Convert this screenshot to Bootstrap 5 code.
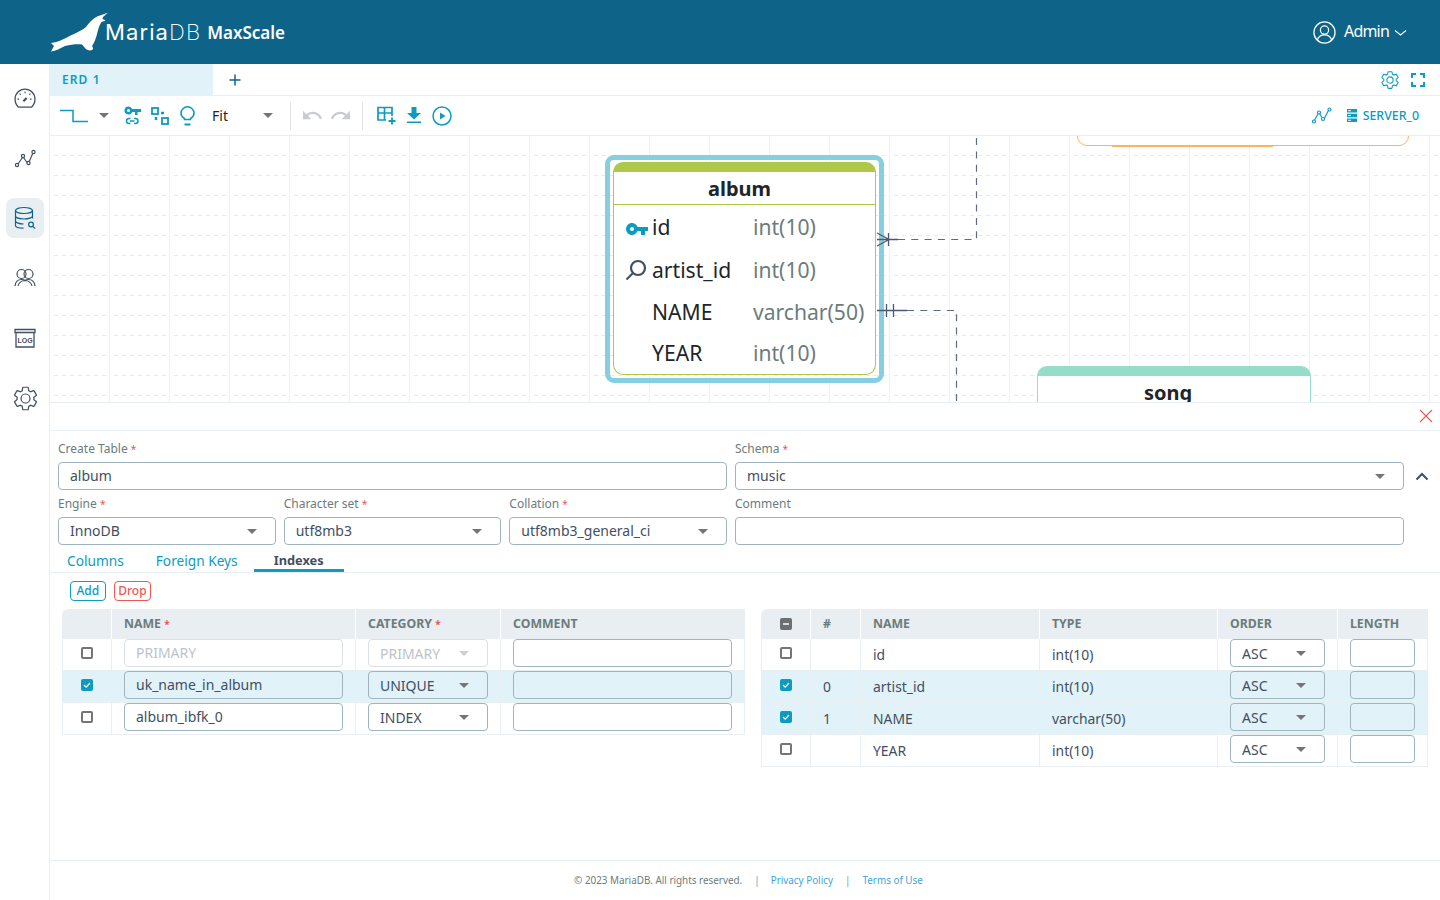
<!DOCTYPE html>
<html lang="en"><head><meta charset="utf-8"><title>MaxScale ERD</title>
<link href="https://cdn.jsdelivr.net/npm/bootstrap@5.3.0/dist/css/bootstrap.min.css" rel="stylesheet">
<style>
html,body{height:900px;overflow:hidden}
body{font-family:"Noto Sans","Liberation Sans",sans-serif;color:#424f62;font-size:14px;background:#fff}
.app-head{height:64px;background:#0e6488;color:#fff}
.logo-seal{margin-left:51px;margin-top:1px}
.logo-m{font-family:Inter,sans-serif;font-size:22px;margin-left:-3px;letter-spacing:1.1px;font-weight:400}
.logo-db{font-weight:200}
.logo-x{font-size:17px;font-weight:600;margin-left:6px;margin-top:2px}
.admin{font-size:16px;margin-right:33px;letter-spacing:-.8px}
.adm-tx{margin-bottom:2px}
.adm-chev{margin-left:5px;margin-top:2px}
.adm-ico{margin-right:8px}
.sidebar{width:50px;border-right:1px solid #e8eef1;padding-top:14px}
.side-btn{width:38px;height:40px;margin:0 0 20px 6px;border-radius:8px}
.side-btn.on{background:#e8eef1}
.main-col{min-width:0}
.tabbar{height:32px;border-bottom:1px solid #e8eef1}
.erd-tab{width:163px;height:31px;background:#e1f3f9;color:#0e9bc0;font-size:12px;font-weight:600;letter-spacing:1.1px;padding-left:12px}
.tb-plus{margin-left:15px;margin-top:9px}
.tb-gear{margin-right:11px}
.tb-full{margin-right:15px}
.toolbar{height:40px;border-bottom:1px solid #e8eef1;padding-left:10px;color:#0e9bc0}
.car{display:inline-block;width:0;height:0;border-left:5px solid transparent;border-right:5px solid transparent;border-top:5px solid #757575;flex:none}
.ml-a{margin-left:11px}.ml-b{margin-left:15px}.ml-c{margin-left:10px}.ml-d{margin-left:11px}
.fit-box{margin-left:17px;width:51px;font-size:14px;color:#212529}
.vdiv{width:1px;height:28px;background:#e0e4e6}
.ml-e{margin-left:17px}.ml-f{margin-left:12px}.ml-g{margin-left:9px}.ml-h{margin-left:12px}.ml-i{margin-left:13px}.ml-j{margin-left:11px}
.srv{font-size:12.4px;font-weight:500;margin:2px 21px 0 6px;color:#0e9bc0}
.ml-l{margin-left:15px}
.canvas{height:267px;border-bottom:1px solid #e8eef1;position:relative;overflow:hidden}
.cv-svg{position:absolute;left:0;top:0}
.node{position:absolute;background:#fff;border-style:solid;border-width:10px 1px 1px;border-radius:10px}
.node-head{font-weight:700;text-align:center;color:#212529}
.hl{position:absolute;left:555px;top:19px;width:279px;height:228px;border:5px solid #87cfe0;border-radius:9px}
.n-album{left:563px;top:26px;width:263px;height:213px;border-color:#aec84a}
.n-album .node-head{font-size:20px;height:33px;line-height:34px;border-bottom:1px solid #aec84a;padding-right:10px}
.n-song{left:987px;top:230px;width:274px;height:80px;border-color:#95dccb}
.n-song .node-head{font-size:20px;line-height:34px;padding-right:12px}
.n-orange{left:1027px;top:-61px;width:332px;height:71px;border:1.5px solid #fdb45e;border-radius:10px}
.n-orange::after{content:"";position:absolute;left:34px;bottom:-1.5px;width:161px;height:2px;background:#fdb45e}
.n-row{height:41.5px;font-size:21.100px;color:#212529}
.n-row.r-a{padding-top:2.5px}
.n-row.r-b{height:44.5px;padding-top:3px}
.n-row.r-c{padding-top:1px}
.n-ico{width:38px;flex:none;padding-left:11px}
.n-ico.i-up{margin-bottom:5px}
.n-ico.i-key{margin-top:-1px}
.n-name{width:101px;flex:none}
.n-type{color:#6c7c7c}
.x-bar{height:28px;border-bottom:1px solid #e8eef1;padding:0 7px 1px 0}
.form-pad{padding:0 0 0 8px}
.f-lab{font-size:12px;line-height:16px;color:#6c7c7c;height:16px;margin-bottom:5px}
.req{color:#eb5757;font-size:10px}
.lab-1{margin-top:10px}
.f-ctl{height:28px;border:1px solid #9fb4bd;border-radius:4px;padding:0 11px;font-size:14px;line-height:26px;color:#424f62;display:flex;align-items:center;justify-content:space-between;background:transparent}
.f-ctl .car{margin-right:7px}
.f-grow{flex:1 1 0;min-width:0}
.form-row{gap:8px;width:1346px}
.chev{width:36px}
.cv-up{margin-top:41px}
.r2{margin-top:6px}
.tabs{height:26px;border-bottom:1px solid #e8eef1;margin-top:2px}
.t-link{font-size:13.7px;color:#0e9bc0;height:25px;line-height:27px}
.t-1{margin-left:17px}.t-2{margin-left:32px}
.t-3{margin-left:16px;width:90px;text-align:center;font-weight:700;color:#424f62;font-size:12.8px;border-bottom:3px solid #0e9bc0;height:25px;line-height:27px}
.btns{padding:8px 0 8px 20px;gap:8px}
.mini{height:20px;border:1px solid #0e9bc0;border-radius:4px;color:#0e9bc0;font-size:12px;line-height:18px;padding:0 5.5px;font-weight:500}
.mini.dr{border-color:#eb5757;color:#eb5757;padding:0 3.5px}
.tbl-wrap{padding-left:12px;gap:16px;align-items:flex-start}
.gt{table-layout:fixed;border-collapse:separate;border-spacing:0;font-size:13.9px;color:#424f62}
.gt th{height:30px;background:#e8eef1;color:#6c7c7c;font-size:12.3px;font-weight:700;padding:0 12px;border-right:1px solid #fff;vertical-align:middle}
.gt th:first-child{border-top-left-radius:6px}
.gt th:last-child{border-right:0}
.gt td{height:32px;padding:0 12px 3px;border-right:1px solid #e8eef1;border-bottom:1px solid #e8eef1;vertical-align:middle}
.gt td.tx{padding:2px 12px 0}
.gt td:first-child{border-left:1px solid #e8eef1;text-align:center;padding:0}
.gt tr.sel td{background:#e1f3f9}
.tl{width:683px}.tr{width:667px}
.gt .f-ctl{height:28px}
.gt .f-ctl.slc{padding-top:1px}
.dis{color:#bcc4c8;border-color:#dbe1e4}
.dis .car{border-top-color:#c9cfd2}
.cb{display:inline-block;width:12px;height:12px;border:2px solid #757575;border-radius:2px;vertical-align:middle;position:relative;top:-2px}
.cb.on{background:#0e9bc0;border-color:#0e9bc0}
.cb.mid{background:#6b6f72;border-color:#6b6f72;top:0}
.cb svg{display:block;margin:-2px}
.app-foot{height:40px;border-top:1px solid #e8eef1;font-size:9.9px;color:#6c7c7c;margin-top:auto;padding-left:7px}
.app-foot a{color:#3f9fe0;text-decoration:none}
.fsep{margin:0 12px;color:#6c9cb8}
.fsep.f-a{margin:0 11px 0 12px}
.ar{padding:0!important;text-align:center}
</style></head>
<body class="d-flex flex-column">
<header class="app-head d-flex align-items-center justify-content-between flex-shrink-0">
 <div class="d-flex align-items-center">
  <svg class="logo-seal" width="57" height="39" viewBox="0 0 57 39"><path fill="#fff" d="M57 0C54 .6 50 2 46 3.500 41 6 38 10 35 14 29 19 22 21 16 24.500 11 27 6 29.500 0 30l3 3-3 5.500C5 38 9 35.500 14 33c6-1.500 12-2 17-1.500 2 2 4 6 8 6 3-.5 4-1.500 2-4.500 1.500-2 3-5.500 4.500-10 1.500-6 2.500-10.500 5-14 .6-.5 2-.7 3.500-1 .5-.5 0-1.200-1.500-1.500-1-.2-1.300-1-.5-2.500C53.500 2.500 55.500 1 57 0z"/></svg>
  <span class="logo-m">Maria<span class="logo-db">DB</span></span><span class="logo-x">MaxScale</span>
 </div>
 <div class="admin d-flex align-items-center">
  <svg class="adm-ico" width="23" height="23" viewBox="0 0 24 24" fill="none" stroke="#fff" stroke-width="1.300"><circle cx="12" cy="12" r="11"/><circle cx="12" cy="9.500" r="4.300"/><path d="M4.500 20c1-3.500 4-5.500 7.500-5.500s6.500 2 7.500 5.500"/></svg>
  <span class="adm-tx">Admin</span>
  <svg class="adm-chev" width="13" height="8" viewBox="0 0 13 8" fill="none" stroke="#fff" stroke-width="1.100"><path d="M1 1.500l5.500 4.500 5.500-4.500"/></svg>
 </div>
</header>
<div class="d-flex flex-grow-1 overflow-hidden">
 <nav class="sidebar flex-shrink-0">
  <div class="side-btn d-flex align-items-center justify-content-center"><svg width="26" height="26" viewBox="0 0 24 24" fill="none" stroke="#424f62" stroke-width="1.200"><path d="M6 20.500h12c2-1.800 3.200-4.400 3.200-7.500A9.200 9.200 0 0 0 2.800 13c0 3.100 1.200 5.700 3.200 7.500z"/><path d="M12 6v1.500M5 13h1.500M18 13h-1.500M7 8l1 1M17 8l-1 1" stroke-width="1"/><path d="M10.500 15l3-3" stroke-width="2"/></svg></div>
  <div class="side-btn d-flex align-items-center justify-content-center"><svg width="24" height="24" viewBox="0 0 24 24" fill="none" stroke="#424f62" stroke-width="1.200"><path d="M5 18l4.500-6.500M10.500 11.500l3.500 5M16 16l3.500-8"/><circle cx="4" cy="19" r="1.600"/><circle cx="10" cy="10" r="1.600"/><circle cx="15.500" cy="17" r="1.600"/><circle cx="20.500" cy="6" r="1.600"/></svg></div>
  <div class="side-btn on d-flex align-items-center justify-content-center"><svg width="24" height="24" viewBox="0 0 24 24" fill="none" stroke="#0e6488" stroke-width="1.200"><ellipse cx="11" cy="4.500" rx="8.500" ry="3"/><path d="M2.500 4.500v15c0 1.700 3.500 2.700 8 2.700M19.500 4.500v8M2.500 10c0 1.700 3.800 3 8.500 3s8.500-1.300 8.500-3M2.500 15c0 1.700 3.800 3 8 3"/><circle cx="18" cy="18.500" r="2.400"/><path d="M19.800 20.300l2.200 2.200"/></svg></div>
  <div class="side-btn d-flex align-items-center justify-content-center"><svg width="24" height="24" viewBox="0 0 24 24" fill="none" stroke="#424f62" stroke-width="1.200"><circle cx="8.500" cy="8" r="4.500"/><circle cx="15.500" cy="8" r="4.500"/><path d="M2 20c.5-4 3-6.500 6.500-6.500 2 0 3 .5 3.500 1 .5-.5 1.500-1 3.500-1 3.500 0 6 2.500 6.500 6.500M5 20c.5-3 3.500-5.500 7-5.500S18.500 17 19 20"/></svg></div>
  <div class="side-btn d-flex align-items-center justify-content-center"><svg width="24" height="24" viewBox="0 0 24 24" fill="none" stroke="#424f62" stroke-width="1.300"><path d="M2 3.500h20v3H2zM3 6.500V21h18V6.500" /><text x="12" y="16.500" text-anchor="middle" font-family="Liberation Sans,sans-serif" font-size="7" font-weight="700" fill="#424f62" stroke="none">LOG</text></svg></div>
  <div class="side-btn d-flex align-items-center justify-content-center"><svg width="27" height="27" viewBox="0 0 24 24" fill="none" stroke="#424f62" stroke-width="1.100"><circle cx="12" cy="12" r="4"/><path d="M10,22C9.75,22 9.54,21.82 9.5,21.58L9.13,18.93C8.5,18.68 7.96,18.34 7.44,17.94L4.95,18.95C4.73,19.03 4.46,18.95 4.34,18.73L2.34,15.27C2.21,15.05 2.27,14.78 2.46,14.63L4.57,12.97L4.5,12L4.57,11L2.46,9.37C2.27,9.22 2.21,8.95 2.34,8.73L4.34,5.27C4.46,5.05 4.73,4.96 4.95,5.05L7.44,6.05C7.96,5.66 8.5,5.32 9.13,5.07L9.5,2.42C9.54,2.18 9.75,2 10,2H14C14.25,2 14.46,2.18 14.5,2.42L14.87,5.07C15.5,5.32 16.04,5.66 16.56,6.05L19.05,5.05C19.27,4.96 19.54,5.05 19.66,5.27L21.66,8.73C21.79,8.95 21.73,9.22 21.54,9.37L19.43,11L19.5,12L19.43,13L21.54,14.63C21.73,14.78 21.79,15.05 21.66,15.27L19.66,18.73C19.54,18.95 19.27,19.04 19.05,18.95L16.56,17.95C16.04,18.34 15.5,18.68 14.87,18.93L14.5,21.58C14.46,21.82 14.25,22 14,22H10Z"/></svg></div>
 </nav>
 <main class="main-col flex-grow-1 d-flex flex-column">
  <div class="tabbar d-flex align-items-start flex-shrink-0">
   <div class="erd-tab d-flex align-items-center">ERD 1</div>
   <svg class="tb-plus" width="14" height="14" viewBox="0 0 14 14" stroke="#0e6488" stroke-width="1.500"><path d="M7 1.500v11M1.500 7h11"/></svg>
   <div class="ms-auto d-flex align-items-center h-100">
    <svg class="tb-gear" width="20" height="20" viewBox="0 0 24 24" fill="none" stroke="#0e9bc0" stroke-width="1.300"><circle cx="12" cy="12" r="3.800"/><path d="M10,22C9.75,22 9.54,21.82 9.5,21.58L9.13,18.93C8.5,18.68 7.96,18.34 7.44,17.94L4.95,18.95C4.73,19.03 4.46,18.95 4.34,18.73L2.34,15.27C2.21,15.05 2.27,14.78 2.46,14.63L4.57,12.97L4.5,12L4.57,11L2.46,9.37C2.27,9.22 2.21,8.95 2.34,8.73L4.34,5.27C4.46,5.05 4.73,4.96 4.95,5.05L7.44,6.05C7.96,5.66 8.5,5.32 9.13,5.07L9.5,2.42C9.54,2.18 9.75,2 10,2H14C14.25,2 14.46,2.18 14.5,2.42L14.87,5.07C15.5,5.32 16.04,5.66 16.56,6.05L19.05,5.05C19.27,4.96 19.54,5.05 19.66,5.27L21.66,8.73C21.79,8.95 21.73,9.22 21.54,9.37L19.43,11L19.5,12L19.43,13L21.54,14.63C21.73,14.78 21.79,15.05 21.66,15.27L19.66,18.73C19.54,18.95 19.27,19.04 19.05,18.95L16.56,17.95C16.04,18.34 15.5,18.68 14.87,18.93L14.5,21.58C14.46,21.82 14.25,22 14,22H10Z"/></svg>
    <svg class="tb-full" width="14" height="14" viewBox="0 0 14 14" fill="none" stroke="#0e9bc0" stroke-width="2"><path d="M1 5V1h4M9 1h4v4M13 9v4H9M5 13H1V9"/></svg>
   </div>
  </div>
  <div class="toolbar d-flex align-items-center flex-shrink-0">
   <svg width="28" height="14" viewBox="0 0 28 14" fill="none" stroke="#0e9bc0" stroke-width="1.500"><path d="M0 1.500h13v11h15"/></svg>
   <span class="car ml-a"></span>
   <svg class="ml-b" width="17" height="19" viewBox="0 0 17 19" fill="none" stroke="#0e9bc0"><path fill="#0e9bc0" stroke="none" d="M4.500 0.500a4 4 0 1 0 3.700 5.500H11v3h2.500V6H17V3H8.200A4 4 0 0 0 4.500.5zm0 2.500a1.500 1.500 0 1 1 0 3 1.500 1.500 0 0 1 0-3z"/><path stroke-width="1.500" d="M6.500 12.500H5a2.500 2.500 0 0 0 0 5h1.500M10 12.500h1.500a2.500 2.500 0 0 1 0 5H10M6 15h4.500"/></svg>
   <svg class="ml-c" width="18" height="18" viewBox="0 0 18 18" fill="none" stroke="#0e9bc0" stroke-width="1.800"><rect x="1" y="1" width="6" height="6"/><rect x="11" y="11" width="6" height="6"/><path d="M10 6h3M5 10v3" stroke-width="2.500"/></svg>
   <svg class="ml-d" width="15" height="20" viewBox="0 0 15 20" fill="none" stroke="#0e9bc0" stroke-width="1.600"><path d="M4.500 13.500v-1C2.300 11.300 1 9.500 1 7.300a6.500 6.500 0 0 1 13 0c0 2.200-1.300 4-3.500 5.200v1z"/><path d="M4.500 18.500h6" stroke-width="2"/></svg>
   <div class="fit-box">Fit</div><span class="car"></span>
   <span class="vdiv ml-e"></span>
   <svg class="ml-f" width="19" height="11" viewBox="2 7 20.500 10" fill="#c9ccce"><path d="M12.500,8C9.85,8 7.45,9 5.6,10.6L2,7V16H11L7.38,12.38C8.77,11.22 10.54,10.5 12.500,10.500C16.040,10.500 19.050,12.810 20.100,16L22.470,15.220C21.080,11.030 17.150,8 12.500,8Z"/></svg>
   <svg class="ml-g" width="19" height="11" viewBox="1.500 7 20.500 10" fill="#c9ccce"><path d="M18.400,10.600C16.550,9 14.150,8 11.500,8C6.850,8 2.920,11.030 1.530,15.220L3.900,16C4.950,12.810 7.960,10.500 11.500,10.500C13.450,10.500 15.230,11.220 16.620,12.380L13,16H22V7L18.400,10.600Z"/></svg>
   <span class="vdiv ml-h"></span>
   <svg class="ml-i" width="20" height="19" viewBox="0 0 20 19" fill="none" stroke="#0e9bc0" stroke-width="1.700"><path d="M10 14H2V1.500h14V10M1.500 7H16M8.500 2v12"/><path d="M16 11.500v7M12.500 15h7" stroke-width="1.800"/></svg>
   <svg class="ml-j" width="14" height="17" viewBox="0 0 14 17" fill="#0e9bc0"><path d="M4.500 0h5v6H14l-7 6.500L0 6h4.500zM0 14.500h14V16H0z"/></svg>
   <svg class="ml-j" width="20" height="20" viewBox="0 0 20 20" fill="none" stroke="#0e9bc0" stroke-width="1.500"><circle cx="10" cy="10" r="9"/><path fill="#0e9bc0" stroke="none" d="M8 6.500v7l5.500-3.500z"/></svg>
   <svg class="ms-auto" width="20" height="17" viewBox="0 0 20 17" fill="none" stroke="#0e9bc0" stroke-width="1.200"><path d="M2.500 13l3.500-6M7.500 6.500l2.500 4M12.500 11l4-7.500"/><circle cx="2" cy="14.500" r="1.500"/><circle cx="7" cy="5.500" r="1.500"/><circle cx="11" cy="12" r="1.500"/><circle cx="17.500" cy="2.500" r="1.500"/></svg>
   <svg class="ml-l" width="10" height="13" viewBox="0 0 10 13" fill="#0e9bc0"><path d="M0 0h10v3.500H0zM0 4.700h10v3.600H0zM0 9.500h10V13H0z"/><path fill="#fff" d="M1 1.200h3v1H1zM1 6h3v1H1zM1 10.800h3v1H1z"/></svg>
   <span class="srv">SERVER_0</span>
  </div>
  <section class="canvas flex-shrink-0">
   <svg class="cv-svg" width="1390" height="267" viewBox="0 0 1390 267">
    <defs><pattern id="gp" width="60" height="20" patternUnits="userSpaceOnUse" x="0" y="0">
     <path d="M4 19.500h4M12 19.500h4M20 19.500h4M28 19.500h4M36 19.500h4M44 19.500h4M52 19.500h4" stroke="#e6eaed" stroke-width="1" fill="none"/>
     <path d="M59.500 0v20" stroke="#eff1f3" stroke-width="1" fill="none"/></pattern></defs>
    <rect width="1390" height="267" fill="url(#gp)"/>
    <g fill="none" stroke="#5c6b80" stroke-width="1.200" stroke-dasharray="7 6.300">
     <path d="M848 103.500h78.500V0"/><path d="M857 174.500h49.500V267"/>
    </g>
    <circle cx="1312" cy="1" r="1" fill="#5c6b80"/><circle cx="1341" cy="1" r="1" fill="#5c6b80"/>
   </svg>
   <div class="n-orange node"></div>
   <div class="hl"></div>
   <div class="node n-album">
    <div class="node-head">album</div>
    <div class="n-row r-a d-flex align-items-center"><span class="n-ico i-key"><svg width="24" height="24" viewBox="0 0 24 24" fill="#0e9bc0"><path d="M7 14C5.900 14 5 13.100 5 12S5.900 10 7 10 9 10.900 9 12 8.100 14 7 14M12.600 10C11.800 7.700 9.600 6 7 6C3.700 6 1 8.700 1 12S3.700 18 7 18C9.600 18 11.800 16.300 12.600 14H16V18H20V14H23V10H12.600Z"/></svg></span><span class="n-name">id</span><span class="n-type">int(10)</span></div>
    <div class="n-row r-b d-flex align-items-center"><span class="n-ico i-up"><svg width="22" height="22" viewBox="0 0 22 22" fill="none" stroke="#424f62" stroke-width="2.200"><circle cx="13" cy="9" r="7"/><path d="M8 14l-6.500 6.500"/></svg></span><span class="n-name">artist_id</span><span class="n-type">int(10)</span></div>
    <div class="n-row r-c d-flex align-items-center"><span class="n-ico"></span><span class="n-name">NAME</span><span class="n-type">varchar(50)</span></div>
    <div class="n-row d-flex align-items-center"><span class="n-ico"></span><span class="n-name">YEAR</span><span class="n-type">int(10)</span></div>
   </div>
   <div class="node n-song"><div class="node-head">song</div></div>
   <svg class="cv-svg" width="1390" height="267" viewBox="0 0 1390 267">
    <g fill="none" stroke="#4a5a72" stroke-width="1.300">
     <path d="M827 97l12 6.500-12 6.500M827 103.500h21M838.500 97v13"/>
     <path d="M827 174.500h30M836.500 168v13M843.500 168v13"/>
    </g>
   </svg>
  </section>
  <div class="x-bar d-flex align-items-center justify-content-end flex-shrink-0"><svg width="14" height="14" viewBox="0 0 14 14" stroke="#eb5757" stroke-width="1.100"><path d="M1 1l12 12M13 1L1 13"/></svg></div>
  <div class="form-pad">
   <div class="d-flex align-items-start">
    <div class="form-row">
     <div class="d-flex form-row">
      <div class="f-grow"><div class="f-lab lab-1">Create Table <span class="req">*</span></div><div class="f-ctl">album</div></div>
      <div class="f-grow"><div class="f-lab lab-1">Schema <span class="req">*</span></div><div class="f-ctl">music<span class="car"></span></div></div>
     </div>
     <div class="d-flex form-row r2">
      <div class="f-grow d-flex gap-2">
       <div class="f-grow"><div class="f-lab">Engine <span class="req">*</span></div><div class="f-ctl">InnoDB<span class="car"></span></div></div>
       <div class="f-grow"><div class="f-lab">Character set <span class="req">*</span></div><div class="f-ctl">utf8mb3<span class="car"></span></div></div>
       <div class="f-grow"><div class="f-lab">Collation <span class="req">*</span></div><div class="f-ctl">utf8mb3_general_ci<span class="car"></span></div></div>
      </div>
      <div class="f-grow"><div class="f-lab">Comment</div><div class="f-ctl"></div></div>
     </div>
    </div>
    <div class="chev d-flex justify-content-center"><svg class="cv-up" width="14" height="9" viewBox="0 0 14 9" fill="none" stroke="#424f62" stroke-width="2"><path d="M1.500 7.500L7 2l5.500 5.500"/></svg></div>
   </div>
  </div>
  <div class="tabs d-flex">
   <span class="t-link t-1">Columns</span><span class="t-link t-2">Foreign Keys</span><span class="t-3">Indexes</span>
  </div>
  <div class="btns d-flex"><span class="mini">Add</span><span class="mini dr">Drop</span></div>
  <div class="tbl-wrap d-flex">
   <table class="gt tl">
    <colgroup><col width="50"><col width="244"><col width="145"><col width="244"></colgroup>
    <thead><tr><th></th><th>NAME <span class="req">*</span></th><th>CATEGORY <span class="req">*</span></th><th>COMMENT</th></tr></thead>
    <tbody>
     <tr><td><span class="cb"></span></td><td><div class="f-ctl dis">PRIMARY</div></td><td><div class="f-ctl slc dis">PRIMARY<span class="car"></span></div></td><td><div class="f-ctl"></div></td></tr>
     <tr class="sel"><td><span class="cb on"><svg width="12" height="12" viewBox="0 0 12 12" fill="none" stroke="#fff" stroke-width="1.200"><path d="M3 6l2.200 2.200L9 4"/></svg></span></td><td><div class="f-ctl">uk_name_in_album</div></td><td><div class="f-ctl slc">UNIQUE<span class="car"></span></div></td><td><div class="f-ctl"></div></td></tr>
     <tr><td><span class="cb"></span></td><td><div class="f-ctl">album_ibfk_0</div></td><td><div class="f-ctl slc">INDEX<span class="car"></span></div></td><td><div class="f-ctl"></div></td></tr>
    </tbody>
   </table>
   <table class="gt tr">
    <colgroup><col width="50"><col width="50"><col width="179"><col width="178"><col width="120"><col width="90"></colgroup>
    <thead><tr><th class="ar"><span class="cb mid"><svg width="12" height="12" viewBox="0 0 12 12" stroke="#fff" stroke-width="1.500"><path d="M3 6h6"/></svg></span></th><th>#</th><th>NAME</th><th>TYPE</th><th>ORDER</th><th>LENGTH</th></tr></thead>
    <tbody>
     <tr><td><span class="cb"></span></td><td class="tx"></td><td class="tx">id</td><td class="tx">int(10)</td><td><div class="f-ctl slc">ASC<span class="car"></span></div></td><td><div class="f-ctl"></div></td></tr>
     <tr class="sel"><td><span class="cb on"><svg width="12" height="12" viewBox="0 0 12 12" fill="none" stroke="#fff" stroke-width="1.200"><path d="M3 6l2.200 2.200L9 4"/></svg></span></td><td class="tx">0</td><td class="tx">artist_id</td><td class="tx">int(10)</td><td><div class="f-ctl slc">ASC<span class="car"></span></div></td><td><div class="f-ctl"></div></td></tr>
     <tr class="sel"><td><span class="cb on"><svg width="12" height="12" viewBox="0 0 12 12" fill="none" stroke="#fff" stroke-width="1.200"><path d="M3 6l2.200 2.200L9 4"/></svg></span></td><td class="tx">1</td><td class="tx">NAME</td><td class="tx">varchar(50)</td><td><div class="f-ctl slc">ASC<span class="car"></span></div></td><td><div class="f-ctl"></div></td></tr>
     <tr><td><span class="cb"></span></td><td class="tx"></td><td class="tx">YEAR</td><td class="tx">int(10)</td><td><div class="f-ctl slc">ASC<span class="car"></span></div></td><td><div class="f-ctl"></div></td></tr>
    </tbody>
   </table>
  </div>
  <footer class="app-foot d-flex align-items-center justify-content-center flex-shrink-0">
   <span>© 2023 MariaDB. All rights reserved.</span><span class="fsep f-a">|</span><a href="#">Privacy Policy</a><span class="fsep">|</span><a href="#">Terms of Use</a>
  </footer>
 </main>
</div>
</body></html>
